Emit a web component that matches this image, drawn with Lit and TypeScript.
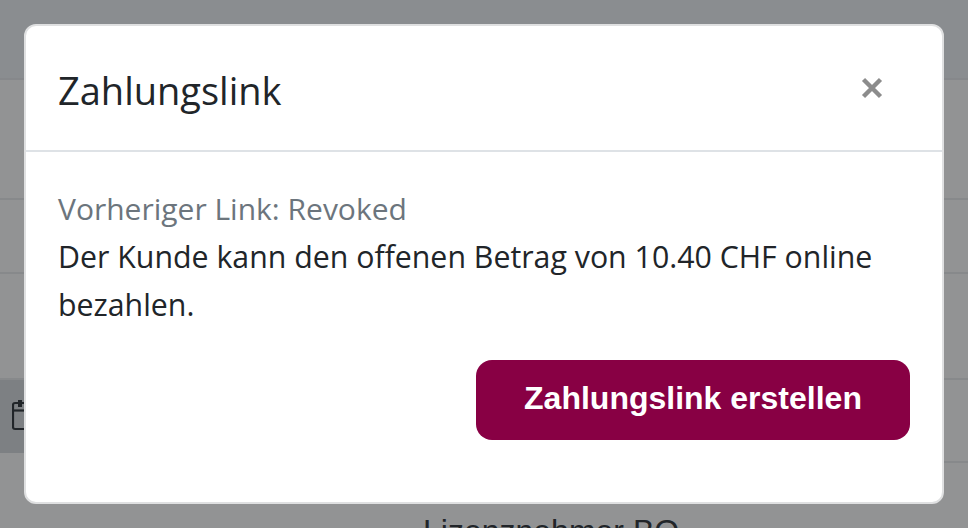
import { LitElement, html, css } from "lit";
import { customElement } from "lit/decorators.js";

@customElement("app-root")
export class AppRoot extends LitElement {
  static styles = css`
    :host {
      display: block;
      position: relative;
      width: 968px;
      height: 528px;
      overflow: hidden;
      background: #929394;
      font-family: "Open Sans", "Noto Sans", sans-serif;
      color: #212529;
    }
    .page { display: flex; flex-direction: column; height: 528px; }
    .top { height: 80px; background: #8a8d90; flex: none; border-bottom: 2px solid #86888b; box-sizing: border-box; }
    .row { flex: none; border-bottom: 2px solid #87898b; box-sizing: border-box; }
    .r1 { height: 120px; }
    .r2 { height: 74px; }
    .r3 { height: 104px; border: 0; }
    .split { flex: none; height: 85px; display: flex; align-items: flex-start; }
    .cell {
      flex: none; width: 100px; height: 75px; box-sizing: border-box;
      background: #7d8083; border-top: 2px solid #87898b;
      display: flex; align-items: center; padding: 0 0 2px 12px;
    }
    .rest {
      flex: 1; height: 85px; box-sizing: border-box;
      border-top: 2px solid #87898b; border-bottom: 2px solid #87898b;
    }
    .licence {
      flex: none; padding-left: 423px; margin-top: 50px;
      font: 32px/37px "Liberation Sans", sans-serif; color: #212529;
    }
    .modal {
      position: absolute; left: 24px; top: 24px; width: 920px; height: 480px;
      box-sizing: border-box; background: #fff;
      border: 2px solid #dfe0e1; border-radius: 12px;
      display: flex; flex-direction: column;
    }
    .head {
      height: 126px; flex: none; box-sizing: border-box;
      border-bottom: 2px solid #dee2e6;
      display: flex; align-items: center; justify-content: space-between;
      padding: 0 58px 0 32px;
    }
    h5 { margin: 4px 0 0; font-size: 38px; font-weight: 400; line-height: 48px; }
    .close { width: 24px; height: 24px; display: block; }
    .body { padding: 33px 32px 0; font-size: 30.3px; line-height: 48px; }
    .muted { color: #6c757d; font-size: 30px; }
    .actions { display: flex; justify-content: flex-end; margin-top: 31px; }
    .btn {
      width: 434px; height: 80px; border: 0; border-radius: 16px;
      padding: 0 0 3px;
      background: #880044; color: #fff;
      font: 700 32px "Liberation Sans", sans-serif;
    }
  `;
  render() {
    return html`
      <div class="page">
        <div class="top"></div>
        <div class="row r1"></div>
        <div class="row r2"></div>
        <div class="row r3"></div>
        <div class="split">
          <div class="cell">
            <svg width="28" height="32" viewBox="0 0 28 32" fill="none" stroke="#212529" stroke-width="2.2">
              <rect x="1" y="3" width="26" height="26" rx="2"></rect>
              <path d="M1 10.5h26"></path>
              <rect x="6" y="0" width="4" height="7" fill="#212529" stroke="none"></rect>
            </svg>
          </div>
          <div class="rest"></div>
        </div>
        <div class="licence">Lizenznehmer BO</div>
      </div>
      <div class="modal">
        <div class="head">
          <h5>Zahlungslink</h5>
          <svg class="close" viewBox="0 0 24 24"><path d="M3.5 3.5L20.5 20.5M20.5 3.5L3.5 20.5" stroke="#8c8c8c" stroke-width="4.4"></path></svg>
        </div>
        <div class="body">
          <div class="muted">Vorheriger Link: Revoked</div>
          <div>Der Kunde kann den offenen Betrag von 10.40 CHF online bezahlen.</div>
          <div class="actions"><button class="btn">Zahlungslink erstellen</button></div>
        </div>
      </div>
    `;
  }
}
